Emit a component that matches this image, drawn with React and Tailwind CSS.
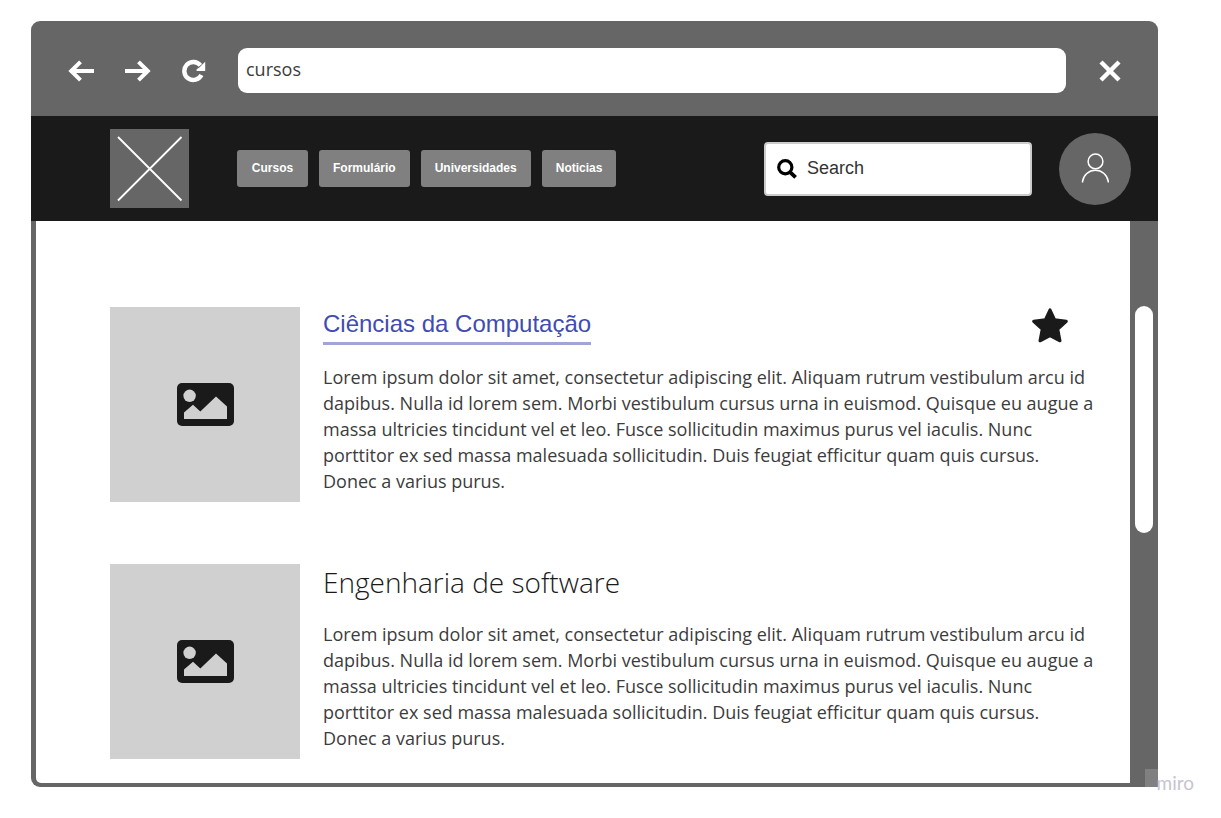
const LOREM =
  'Lorem ipsum dolor sit amet, consectetur adipiscing elit. Aliquam rutrum vestibulum arcu id dapibus. Nulla id lorem sem. Morbi vestibulum cursus urna in euismod. Quisque eu augue a massa ultricies tincidunt vel et leo. Fusce sollicitudin maximus purus vel iaculis. Nunc porttitor ex sed massa malesuada sollicitudin. Duis feugiat efficitur quam quis cursus. Donec a varius purus.';

const NAV_ITEMS = ['Cursos', 'Formulário', 'Universidades', 'Noticias'];

function ArrowIcon({ className }) {
  return (
    <svg viewBox="0 0 26 22" className={className} fill="none" stroke="currentColor" strokeWidth="4" aria-hidden="true">
      <path d="M3 11H26" />
      <path d="M12.5 1.8L3.2 11L12.5 20.2" />
    </svg>
  );
}

function ReloadIcon() {
  return (
    <svg viewBox="0 0 24 24" className="h-6 w-6" aria-hidden="true">
      <path d="M19.4 16A9 9 0 1 1 18.4 6.4" fill="none" stroke="currentColor" strokeWidth="4.4" />
      <path d="M23.2 2.8V12H14.6V10.2L17.4 8.6Z" fill="currentColor" />
    </svg>
  );
}

function CloseIcon() {
  return (
    <svg viewBox="0 0 22 22" className="h-[22px] w-[22px]" fill="none" stroke="currentColor" strokeWidth="4.4" aria-hidden="true">
      <path d="M2 2L20 20M20 2L2 20" />
    </svg>
  );
}

function SearchIcon() {
  return (
    <svg viewBox="0 0 20 20" className="h-5 w-5 shrink-0 text-black" fill="none" stroke="currentColor" aria-hidden="true">
      <circle cx="8.3" cy="8.2" r="6.6" strokeWidth="3.2" />
      <path d="M12.8 12.8L18.6 18.4" strokeWidth="3.8" />
    </svg>
  );
}

function UserIcon() {
  return (
    <svg viewBox="0 0 28 31" className="h-[31px] w-7" fill="none" stroke="currentColor" strokeWidth="1.5" aria-hidden="true">
      <circle cx="14.5" cy="8.4" r="7.4" />
      <path d="M1.5 29.5V28.6A13 13 0 0 1 27.3 28.6V29.5" />
    </svg>
  );
}

function PictureIcon() {
  return (
    <svg viewBox="0 0 57 43" className="h-[43px] w-[57px]" aria-hidden="true">
      <rect width="57" height="43" rx="5" fill="#1a1a1a" />
      <circle cx="12.6" cy="12.8" r="6.2" fill="#d0d0d0" />
      <path d="M7 36V29.5L16 21.8L23.3 28.6L39 13.4L50 23.6V36Z" fill="#d0d0d0" />
    </svg>
  );
}

function StarIcon() {
  return (
    <svg viewBox="0 0 36 35" className="h-[35px] w-9" aria-hidden="true">
      <path
        d="M18 1.8L22.7 11.8L34.3 13.3L25.8 21.2L28 32.8L18 27.6L8 32.8L10.2 21.2L1.7 13.3L13.3 11.8Z"
        fill="#1a1a1a"
        stroke="#1a1a1a"
        strokeWidth="3"
        strokeLinejoin="round"
      />
    </svg>
  );
}

function Course({ title, favourite }) {
  return (
    <article className="flex gap-[23px]">
      <div className="flex h-[195px] w-[190px] shrink-0 items-center justify-center bg-[#d0d0d0]">
        <PictureIcon />
      </div>
      <div className="min-w-0 flex-1">
        <div className="flex h-[38px] items-start justify-between pr-7">
          {title}
          {favourite && (
            <button type="button" aria-label="Favorito" className="mt-px">
              <StarIcon />
            </button>
          )}
        </div>
        <p className="mt-[19px] text-[18px] leading-[26px] text-[#3c3c3c]">{LOREM}</p>
      </div>
    </article>
  );
}

export default function App() {
  return (
    <div className="min-h-screen bg-white pt-[21px] pr-[63px] pb-[31px] pl-[31px] font-['Open_Sans',sans-serif] text-[#1a1a1a]">
      <div className="relative">
        <div className="overflow-hidden rounded-t-[9px] rounded-bl-[9px] bg-[#666]">
          <header className="flex h-[95px] items-center pt-1 pr-[37px] pl-[37px] text-white">
            <div className="flex items-center gap-[31px]">
              <button type="button" aria-label="Voltar">
                <ArrowIcon className="h-[22px] w-[26px]" />
              </button>
              <button type="button" aria-label="Avançar">
                <ArrowIcon className="h-[22px] w-[26px] rotate-180" />
              </button>
              <button type="button" aria-label="Recarregar">
                <ReloadIcon />
              </button>
            </div>
            <input
              type="text"
              aria-label="Endereço"
              defaultValue="cursos"
              className="mr-[33px] ml-8 h-[45px] min-w-0 flex-1 rounded-[9px] bg-white px-2 pb-[3px] text-[18px] text-[#3c3c3c]"
            />
            <button type="button" aria-label="Fechar">
              <CloseIcon />
            </button>
          </header>

          <nav className="flex h-[105px] items-center bg-[#1a1a1a] pr-[27px] pl-[79px] font-['Liberation_Sans',sans-serif]">
            <a href="#inicio" aria-label="Início" className="shrink-0 bg-[#666]">
              <svg viewBox="0 0 79 79" className="h-[79px] w-[79px]" stroke="#fff" strokeWidth="1.8" aria-hidden="true">
                <path d="M8 8L71.5 71.5M71.5 8L8 71.5" />
              </svg>
            </a>
            <div className="ml-12 flex gap-[11px]">
              {NAV_ITEMS.map((item) => (
                <button
                  key={item}
                  type="button"
                  className="h-[37px] min-w-[71px] rounded-[3px] bg-[#808080] px-[14px] pb-px text-[12px] font-bold text-white"
                >
                  {item}
                </button>
              ))}
            </div>
            <label className="ml-auto flex h-[54px] w-[268px] items-center gap-[10px] rounded-[4px] border-2 border-[#ccc] bg-white px-[11px]">
              <SearchIcon />
              <input
                type="text"
                aria-label="Search"
                placeholder="Search"
                className="min-w-0 flex-1 text-[18px] text-[#1a1a1a] placeholder:text-[#333]"
              />
            </label>
            <button
              type="button"
              aria-label="Perfil"
              className="ml-[27px] flex h-[72px] w-[72px] items-center justify-center rounded-full bg-[#666] text-white"
            >
              <UserIcon />
            </button>
          </nav>

          <div className="flex">
            <main className="mb-1 ml-[5px] flex min-w-0 flex-1 flex-col gap-[62px] rounded-bl-[5px] bg-white pt-[86px] pr-[34px] pb-6 pl-[74px]">
              <Course
                favourite
                title={
                  <h2 className="font-['Liberation_Sans',sans-serif] text-[24px] leading-[34px] text-[#414bb2]">
                    <a href="#ciencias" className="block border-b-[3px] border-[#a0a5d8] pb-px">
                      Ciências da Computação
                    </a>
                  </h2>
                }
              />
              <Course title={<h2 className="text-[28px] leading-[36px] font-light">Engenharia de software</h2>} />
            </main>
            <div className="flex w-7 justify-center pt-[85px]">
              <div className="h-[227px] w-[18px] rounded-full bg-white" />
            </div>
          </div>
        </div>
        <div className="absolute right-0 bottom-0 h-[18px] w-[13px] bg-[#808080]" />
        <span className="absolute -right-9 -bottom-2 font-['Lato',sans-serif] text-[19px] leading-6 text-[#c5c5cf]">miro</span>
      </div>
    </div>
  );
}
